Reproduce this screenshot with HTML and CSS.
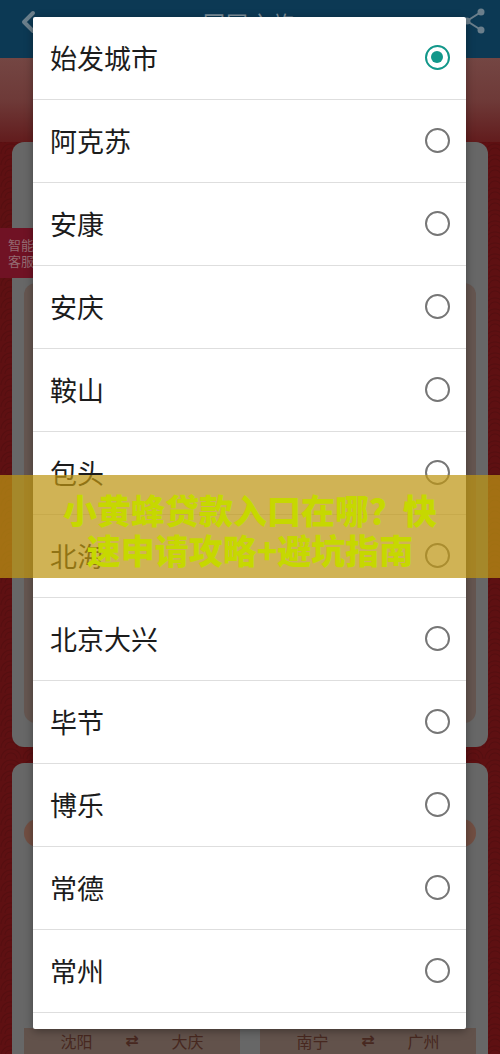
FILE: index.html
```html
<!DOCTYPE html>
<html lang="zh-CN">
<head>
    <meta charset="UTF-8">
    <meta name="viewport" content="width=device-width, initial-scale=1.0">
    <title>回国之旅</title>
    <link rel="stylesheet" href="styles.css">
</head>
<body>
    <div class="app">
        <div class="topbar">
            <svg class="back" width="16" height="24" viewBox="0 0 16 24"><path d="M13 3 L4 12 L13 21" fill="none" stroke="#6b7f8c" stroke-width="4" stroke-linecap="round" stroke-linejoin="round"/></svg>
            <div class="title">回国之旅</div>
            <svg class="share" width="24" height="26" viewBox="0 0 24 26"><circle cx="19" cy="4" r="3.5" fill="#6b7f8c"/><circle cx="5" cy="13" r="3.5" fill="#6b7f8c"/><circle cx="19" cy="22" r="3.5" fill="#6b7f8c"/><path d="M19 4 L5 13 L19 22" fill="none" stroke="#6b7f8c" stroke-width="2"/></svg>
        </div>
        <div class="hero"></div>
        <div class="card card-top">
            <div class="card-inner"></div>
        </div>
        <div class="card card-routes">
            <div class="pill"></div>
            <div class="spacer"></div>
            <div class="routes">
                <div class="route"><span>沈阳</span><span class="swap">⇄</span><span>大庆</span></div>
                <div class="route"><span>南宁</span><span class="swap">⇄</span><span>广州</span></div>
            </div>
        </div>
        <div class="service">智能<br>客服</div>
    </div>

    <!-- 城市选择弹窗 -->
    <div class="dialog">
        <div class="option"><span>始发城市</span><i class="radio checked"></i></div>
        <div class="option"><span>阿克苏</span><i class="radio"></i></div>
        <div class="option"><span>安康</span><i class="radio"></i></div>
        <div class="option"><span>安庆</span><i class="radio"></i></div>
        <div class="option"><span>鞍山</span><i class="radio"></i></div>
        <div class="option"><span>包头</span><i class="radio"></i></div>
        <div class="option"><span>北海</span><i class="radio"></i></div>
        <div class="option"><span>北京大兴</span><i class="radio"></i></div>
        <div class="option"><span>毕节</span><i class="radio"></i></div>
        <div class="option"><span>博乐</span><i class="radio"></i></div>
        <div class="option"><span>常德</span><i class="radio"></i></div>
        <div class="option"><span>常州</span><i class="radio"></i></div>
        <div class="option"><span>郴州</span><i class="radio"></i></div>
    </div>

    <div class="banner">小黄蜂贷款入口在哪？快速申请攻略+避坑指南</div>
</body>
</html>
```

FILE: styles.css
```css
body {
    margin: 0;
    font-family: "Noto Sans CJK SC", "Noto Sans", sans-serif;
    background: #5e1012;
}
.app {
    position: relative;
    width: 500px;
    height: 1054px;
    overflow: hidden;
    background-color: #5e1012;
    background-image:
        radial-gradient(circle at 50% 100%, transparent 5px, rgba(0,0,0,0.1) 6px, transparent 7px, transparent 9px, rgba(0,0,0,0.1) 10px, transparent 11px);
    background-size: 22px 11px;
}
.topbar {
    height: 58px;
    background: #0c3954;
    display: flex;
    align-items: flex-start;
    justify-content: space-between;
    padding: 8px 14px 0 20px;
    box-sizing: border-box;
}
.back {
    margin-top: 2px;
}
.title {
    color: #7d8d98;
    font-size: 22px;
    line-height: 28px;
    letter-spacing: 1px;
}
.hero {
    height: 84px;
    background: linear-gradient(to bottom, #744643, #6e3a38 50%, #621c1d);
}
.card {
    margin: 0 12px;
    background: #676767;
    border-radius: 12px;
}
.card-top {
    height: 605px;
    padding: 141px 12px 0;
    box-sizing: border-box;
    margin-bottom: 16px;
}
.card-inner {
    height: 440px;
    background: #655650;
    border-radius: 12px;
}
.card-routes {
    height: 320px;
    padding: 56px 12px 0;
    box-sizing: border-box;
}
.pill {
    height: 28px;
    border-radius: 14px;
    background: #714e42;
}
.spacer {
    height: 181px;
}
.routes {
    display: flex;
    gap: 20px;
}
.route {
    flex: 1;
    display: flex;
    justify-content: space-around;
    align-items: center;
    height: 26px;
    line-height: 26px;
    background: #62524b;
    color: #472820;
    font-size: 16px;
    padding: 0 20px;
}
.swap {
    font-family: "DejaVu Sans", sans-serif;
    font-weight: bold;
}
.service {
    position: absolute;
    left: 0;
    top: 228px;
    width: 40px;
    height: 50px;
    background: #701224;
    color: #946a72;
    font-size: 13px;
    line-height: 16px;
    padding: 9px 0 0 8px;
    box-sizing: border-box;
}
.dialog {
    position: absolute;
    left: 33px;
    top: 17px;
    width: 433px;
    height: 1012px;
    background: #fff;
    border-radius: 2px;
    overflow: hidden;
    box-shadow: 0 2px 8px rgba(0,0,0,0.35);
}
.option {
    height: 83px;
    box-sizing: border-box;
    border-bottom: 1px solid #dedede;
    display: flex;
    align-items: center;
    justify-content: space-between;
    padding: 0 16px 2px 17px;
    font-size: 27px;
    color: #1c1c1c;
}
.radio {
    width: 25px;
    height: 25px;
    box-sizing: border-box;
    border: 2.5px solid #767676;
    border-radius: 50%;
    position: relative;
}
.radio.checked {
    border-color: #12978a;
}
.radio.checked::after {
    content: "";
    position: absolute;
    left: 4px;
    top: 4px;
    width: 12px;
    height: 12px;
    border-radius: 50%;
    background: #12978a;
}
.banner {
    position: absolute;
    left: 0;
    top: 475px;
    width: 500px;
    height: 103px;
    box-sizing: border-box;
    padding: 15px 60px 0;
    background: rgba(190, 150, 20, 0.72);
    color: #c6d800;
    font-size: 34px;
    font-weight: 900;
    line-height: 40px;
    text-align: center;
}
```
